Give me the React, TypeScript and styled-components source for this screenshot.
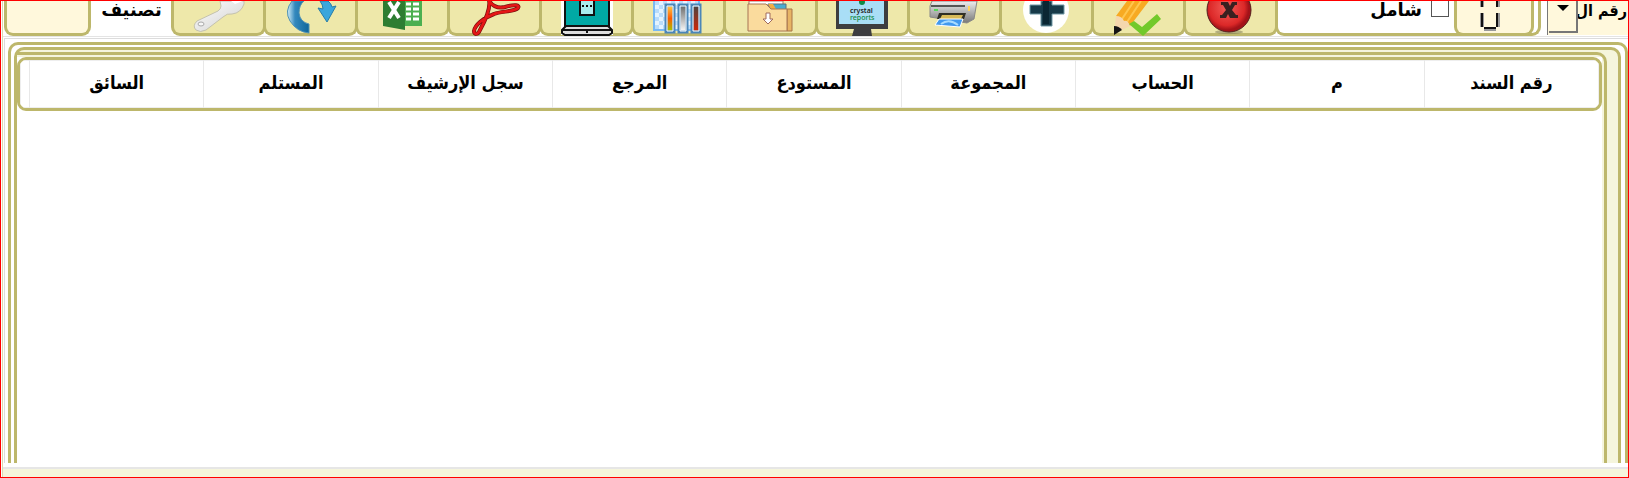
import React from "react";
import styled, { createGlobalStyle } from "styled-components";

const KHAKI = "#bdb76b";
const CREAM = "#fff8dc";
const BEIGE = "#f5f5dc";

const GlobalStyle = createGlobalStyle`
  *, *::before, *::after { box-sizing: border-box; }
  body { margin: 0; background: #fff; }
  body, button, input, select { font-family: "DejaVu Sans", sans-serif; color: #000; }
`;

const Page = styled.div`
  min-height: 100vh;
  display: flex;
  flex-direction: column;
  border: 1px solid #f00;
  background: #fff;
`;

const Body = styled.div`
  flex: 1;
  display: flex;
  flex-direction: column;
  margin-left: 1px;
  border-left: 1px solid #dcd9b0;
`;

const Toolbar = styled.div`
  display: flex;
  height: 36px;
  padding-left: 1px;
  border-bottom: 1px solid #e4e4e4;
`;

const CategoryInput = styled.input`
  width: 87px;
  height: 35px;
  padding: 0 8px;
  border: 3px solid ${KHAKI};
  border-top: 0;
  border-radius: 0 0 9px 9px;
  background: ${CREAM};
`;

const CategoryLabel = styled.label`
  width: 81px;
  height: 24px;
  text-align: center;
  font-size: 18px;
  font-weight: 700;
  line-height: 18px;
`;

const ToolGroup = styled.div`
  display: flex;
  margin-left: -1px;
  padding-right: 3px;
`;

const ToolButton = styled.button`
  width: 95px;
  height: 35px;
  margin-right: -3px;
  padding: 0;
  border: 3px solid ${KHAKI};
  border-top: 0;
  border-radius: 0 0 9px 9px;
  background: #eee8aa;

  svg {
    display: block;
    width: 95px;
    height: 36px;
    margin-left: -3px;
  }
`;

const SearchBox = styled.div`
  flex: 1;
  display: flex;
  justify-content: flex-end;
  height: 35px;
  margin-left: -3px;
  border: 3px solid ${KHAKI};
  border-top: 0;
  border-radius: 0 0 9px 9px;
  background: #fff;
`;

const CheckLabel = styled.label`
  display: flex;
  gap: 9px;
  height: 24px;
  margin-right: 5px;
  font-size: 18px;
  font-weight: 700;
  line-height: 18px;
`;

const CheckBox = styled.input`
  appearance: none;
  width: 18px;
  height: 16px;
  margin: 0;
  border: 1px solid #555;
  border-top: 0;
  background: #fff;
`;

const ScanButton = styled.button`
  width: 80px;
  height: 35px;
  margin-right: 4px;
  padding: 0;
  border: 3px solid ${KHAKI};
  border-top: 0;
  border-radius: 0 0 9px 9px;
  background: ${CREAM};

  svg { display: block; margin-left: 21px; width: 24px; height: 32px; }
`;

const Combo = styled.div`
  position: relative;
  width: 81px;
  height: 34px;
  margin-left: 6px;
  border-left: 1px solid #777;
  background: ${CREAM};
`;

const ComboSelect = styled.select`
  display: block;
  appearance: none;
  width: 80px;
  height: 20px;
  padding: 0 1px 0 30px;
  border: 0;
  background: transparent;
  font-family: "DejaVu Sans Condensed", "DejaVu Sans", sans-serif;
  font-size: 16px;
  font-weight: 700;
  line-height: 20px;
`;

const ComboArrow = styled.span`
  position: absolute;
  top: 0;
  left: 1px;
  width: 29px;
  height: 32px;
  border: solid #777;
  border-width: 0 2px 2px 0;
  background: ${CREAM};
  pointer-events: none;

  &::after {
    content: "";
    position: absolute;
    left: 8px;
    top: 4px;
    border: 6px solid transparent;
    border-top-color: #000;
    border-bottom: 0;
  }
`;

const Workspace = styled.main`
  flex: 1;
  display: flex;
  margin: 1px 0 0 1px;
  padding: 3px 0 0 3px;
  border: solid #dcdcdc;
  border-width: 1px 0 0 1px;
`;

const Frame = styled.div<{ $tone?: string; $gap?: string; $flushLeft?: boolean }>`
  flex: 1;
  display: flex;
  min-width: 0;
  padding: ${(p) => p.$gap ?? "2px"};
  border: solid ${KHAKI};
  border-width: ${(p) => (p.$flushLeft ? "3px 3px 0 0" : "3px 3px 0 3px")};
  border-radius: ${(p) => (p.$flushLeft ? "0 10px 0 0" : "10px 10px 0 0")};
  background: ${(p) => p.$tone ?? "#fff"};
`;

const GridArea = styled.div`
  flex: 1;
  min-width: 0;
  background: #fff;
`;

const HeaderFrame = styled.div`
  border: 3px solid ${KHAKI};
  border-radius: 9px;
  overflow: hidden;
  background: #fff;
`;

const Table = styled.table`
  width: 100%;
  border: 1px solid #eee;
  border-collapse: collapse;
  table-layout: fixed;
`;

const HeadCell = styled.th`
  height: 47px;
  padding: 0 0 2px;
  border-left: 1px solid #e8e8e8;
  font-family: "DejaVu Sans Condensed", "DejaVu Sans", sans-serif;
  font-size: 18px;
  font-weight: 700;
  line-height: 24px;
  white-space: nowrap;
`;

const Filler = styled.td`
  width: 9px;
  padding: 0;
`;

const Footer = styled.footer`
  height: 10px;
  margin-top: 4px;
  border-top: 2px solid #e6e6e6;
  background: ${BEIGE};
`;

const Wrench = () => (
  <svg viewBox="0 0 95 36">
    <defs>
      <linearGradient id="steel" x1="0" y1="0" x2="1" y2="1">
        <stop offset="0" stopColor="#fff" />
        <stop offset="1" stopColor="#cfcfcf" />
      </linearGradient>
    </defs>
    <path d="M49 0 50 5Q50 8 47 10L26 20Q21 25 25 29Q29 32 35 29L52 16Q56 12 61 13Q70 12 73 3V0Z" fill="url(#steel)" stroke="#c4c2ae" />
    <path d="M60 0 64 3 72 0Z" fill="#fff" />
    <ellipse cx="30" cy="23" rx="3" ry="2" fill="#f7f7f7" stroke="#aaa" />
  </svg>
);

const Refresh = () => (
  <svg viewBox="0 0 95 36">
    <defs>
      <linearGradient id="blue" x1="0" x2="1">
        <stop offset="0" stopColor="#d3effa" />
        <stop offset=".35" stopColor="#3388bd" />
        <stop offset="1" stopColor="#0e669b" />
      </linearGradient>
    </defs>
    <path d="M29 0Q21 10 27 20Q34 31 46 32V23Q37 21 36 12Q36 4 41 0Z" fill="url(#blue)" stroke="#4f91b3" />
    <path d="M57 0Q60 4 60 8L55 7 64 21 73 5 69 6Q68 2 65 0Z" fill="#3ba6dc" stroke="#287da8" />
  </svg>
);

const Excel = () => (
  <svg viewBox="0 0 95 36">
    <path d="M49 0H67V25H49Z" fill="#4caf50" />
    <path d="M51 3H56M58 3H64M51 8H56M58 8H64M51 13H56M58 13H64M51 18H56M58 18H64" stroke="#fff" strokeWidth="3" />
    <path d="M28 0H50V29L28 25Z" fill="#2e7d32" />
    <path d="M34 1 44 17M44 1 34 17" stroke="#fff" strokeWidth="4" />
  </svg>
);

const PDF_RIBBON =
  "M42 -1C44 4 50 8 58 6C68 3 73 4 71 7C67 11 54 10 47 13C36 17 28 24 27 30C27 34 31 34 33 29C38 20 44 8 42 -1";

const Pdf = () => (
  <svg viewBox="0 0 95 36">
    <g fill="none" strokeLinejoin="round" strokeLinecap="round">
      <path d={PDF_RIBBON} stroke="#791010" strokeWidth="4" />
      <path d={PDF_RIBBON} stroke="#e51616" strokeWidth="2.6" />
    </g>
  </svg>
);

const Laptop = () => (
  <svg viewBox="0 0 95 36">
    <path d="M22 0H74V34H22Z" fill="#fff" />
    <path d="M26 0V25H70V0" fill="#00a9a5" stroke="#111" strokeWidth="2" />
    <path d="M41 0V14H55V0" fill="#a8eeee" stroke="#111" strokeWidth="2" />
    <path d="M43 5H53" stroke="#111" strokeWidth="2" strokeDasharray="2 2" />
    <path d="M27 25H69L73 29V32L70 34H26L23 32V29Z" fill="#ddd" stroke="#111" strokeWidth="2" />
    <path d="M24 29H72M48 29V32" stroke="#111" strokeWidth="2" />
  </svg>
);

const Palette = () => (
  <svg viewBox="0 0 95 36">
    <defs>
      <linearGradient id="hot" x1="0" y1="0" x2="0" y2="1">
        <stop offset="0" stopColor="#ffd34c" />
        <stop offset=".5" stopColor="#ff5b00" />
        <stop offset="1" stopColor="#9bd000" />
      </linearGradient>
      <linearGradient id="gray" x1="0" y1="0" x2="0" y2="1">
        <stop offset="0" stopColor="#666" />
        <stop offset="1" stopColor="#fff" />
      </linearGradient>
      <linearGradient id="rust" x1="0" y1="0" x2="0" y2="1">
        <stop offset="0" stopColor="#454545" />
        <stop offset="1" stopColor="#da2500" />
      </linearGradient>
      <pattern id="checks" width="8" height="8" patternUnits="userSpaceOnUse">
        <path d="M0 0H8V8H0Z" fill="#e4f3ff" />
        <path d="M0 0H4V4H0ZM4 4H8V8H4Z" fill="#b9dcfb" />
      </pattern>
    </defs>
    <path d="M23 0V29H68V0" fill="url(#checks)" stroke="#79b9f4" strokeWidth="2" />
    <g stroke="#4b86b8" strokeWidth="3">
      <path d="M35 4H43V31H35Z" fill="url(#hot)" />
      <path d="M48 4H56V31H48Z" fill="url(#gray)" />
      <path d="M61 4H69V31H61Z" fill="url(#rust)" />
    </g>
    <path d="M36 5H42V30H36ZM49 5H55V30H49ZM62 5H68V30H62Z" fill="none" stroke="#fff" />
  </svg>
);

const Folder = () => (
  <svg viewBox="0 0 95 36">
    <path d="M26 0H60V4H26Z" fill="#fff" stroke="#a77461" />
    <path d="M45 3H63V9H48Z" fill="#48acd0" stroke="#5b6f7b" />
    <path d="M45 3H50L53 8H48Z" fill="#f2ad45" />
    <path d="M64 8H69V30H64Z" fill="#e7b465" stroke="#a87547" />
    <path d="M25 3H43L48 8H64V30H25Z" fill="#fadb9d" stroke="#a77555" />
    <path d="M43 12H47V18H50L45 23 40 18H43Z" fill="#fff" stroke="#a06b5d" />
  </svg>
);

const Monitor = () => (
  <svg viewBox="0 0 95 36">
    <path d="M21 0H73V28H56L57 35H37L39 28H21Z" fill="#3d3d3f" />
    <path d="M24 0H69V23H24Z" fill="#a9def6" />
    <circle cx="47" cy="1" r="3" fill="#108945" />
    <text x="35" y="12" fontFamily="Noto Sans, sans-serif" fontSize="7" fontWeight="600" fill="#222">crystal</text>
    <text x="35" y="19" fontFamily="Noto Sans, sans-serif" fontSize="7" fontWeight="500" fill="#108945">reports</text>
  </svg>
);

const Printer = () => (
  <svg viewBox="0 0 95 36">
    <defs>
      <linearGradient id="case" x1="0" y1="0" x2="0" y2="1">
        <stop offset="0" stopColor="#eee" />
        <stop offset="1" stopColor="#777" />
      </linearGradient>
    </defs>
    <path d="M25 0H70L67 18 60 22 23 16V5Z" fill="url(#case)" stroke="#888" />
    <path d="M24 5H58" stroke="#555" strokeWidth="2" />
    <path d="M32 12H59L57 18H30Z" fill="#302f25" />
    <path d="M35 14H56L54 18H33Z" fill="#d8ba58" />
    <path d="M32 18H56L53 26 28 24Z" fill="#4299ee" stroke="#fff" />
    <path d="M34 23Q42 17 51 24" fill="none" stroke="#a7dbff" strokeWidth="2" />
    <path d="M27 9H31" stroke="#57d55a" strokeWidth="2" />
    <path d="M62 5V10" stroke="#ffd35c" strokeWidth="2" />
  </svg>
);

const Plus = () => (
  <svg viewBox="0 0 95 36">
    <circle cx="47" cy="9" r="23" fill="#fff" />
    <path d="M42 0H53V4H65V13H53V25H42V13H31V4H42Z" fill="#173a49" stroke="#6e97a5" />
    <path d="M44 0H50V23H44Z" fill="#0a2633" />
  </svg>
);

const Pencil = () => (
  <svg viewBox="0 0 95 36">
    <path d="M36 0 25 15 39 25 58 0Z" fill="#f7aa22" />
    <path d="M43 0 31 18M50 0 36 21" stroke="#ffc64e" strokeWidth="2" />
    <path d="M25 15 23 33 39 25Q37 19 33 20Q31 15 25 15Z" fill="#f5d7ad" />
    <path d="M23 25V34L31 29Q28 25 23 25Z" fill="#151515" />
    <path d="M38 23 43 20 51 26 66 13 70 18 52 35Z" fill="#72c92b" />
  </svg>
);

const Close = () => (
  <svg viewBox="0 0 95 36">
    <defs>
      <radialGradient id="red" cx=".45" cy=".45">
        <stop offset="0" stopColor="#f45d58" />
        <stop offset=".8" stopColor="#dc2828" />
        <stop offset="1" stopColor="#a31218" />
      </radialGradient>
    </defs>
    <ellipse cx="46" cy="31" rx="14" ry="2" fill="#77734f" opacity=".5" />
    <circle cx="46" cy="9" r="22" fill="url(#red)" stroke="#54201e" />
    <path d="M38 1H45L47 5 49 1H54V4H52L49 9 53 14H55V17H47L45 13 43 17H37V14H39L43 9 40 4H38Z" fill="#392020" />
  </svg>
);

const tools: [string, React.FC][] = [
  ["إعدادات", Wrench],
  ["تحديث", Refresh],
  ["Excel", Excel],
  ["PDF", Pdf],
  ["عرض", Laptop],
  ["ألوان", Palette],
  ["أرشيف", Folder],
  ["Crystal Reports", Monitor],
  ["طباعة", Printer],
  ["إضافة", Plus],
  ["تعديل", Pencil],
  ["إغلاق", Close],
];

const columns = ["رقم السند", "م", "الحساب", "المجموعة", "المستودع", "المرجع", "سجل الإرشيف", "المستلم", "السائق"];

export default function App() {
  return (
    <Page>
      <GlobalStyle />
      <Body>
        <Toolbar>
          <CategoryInput id="category" />
          <CategoryLabel htmlFor="category">تصنيف</CategoryLabel>
          <ToolGroup>
            {tools.map(([name, Icon]) => (
              <ToolButton key={name} type="button" aria-label={name}>
                <Icon />
              </ToolButton>
            ))}
          </ToolGroup>
          <SearchBox>
            <CheckLabel>
              شامل
              <CheckBox type="checkbox" />
            </CheckLabel>
            <ScanButton type="button" aria-label="بحث">
              <svg viewBox="0 0 24 32">
                <path d="M4 0V6M20 0V6M4 12V26M20 12V26M6 28H18" stroke="#999" strokeWidth="4" />
                <path d="M4 0V6M19 0V6M4 12V26M19 12V26M6 27H18" stroke="#111" strokeWidth="2" />
              </svg>
            </ScanButton>
          </SearchBox>
          <Combo>
            <ComboSelect dir="rtl" aria-label="حقل البحث">
              <option>رقم ال</option>
            </ComboSelect>
            <ComboArrow />
          </Combo>
        </Toolbar>
        <Workspace>
          <Frame $gap="2px 4px 0 3px">
            <Frame $tone={BEIGE} $gap="2px 11px 0 0">
              <Frame $flushLeft $tone={BEIGE} $gap="2px 2px 0 0">
                <GridArea>
                  <HeaderFrame>
                    <Table dir="rtl">
                      <thead>
                        <tr>
                          {columns.map((name) => (
                            <HeadCell key={name} scope="col">{name}</HeadCell>
                          ))}
                          <Filler />
                        </tr>
                      </thead>
                    </Table>
                  </HeaderFrame>
                </GridArea>
              </Frame>
            </Frame>
          </Frame>
        </Workspace>
        <Footer />
      </Body>
    </Page>
  );
}
